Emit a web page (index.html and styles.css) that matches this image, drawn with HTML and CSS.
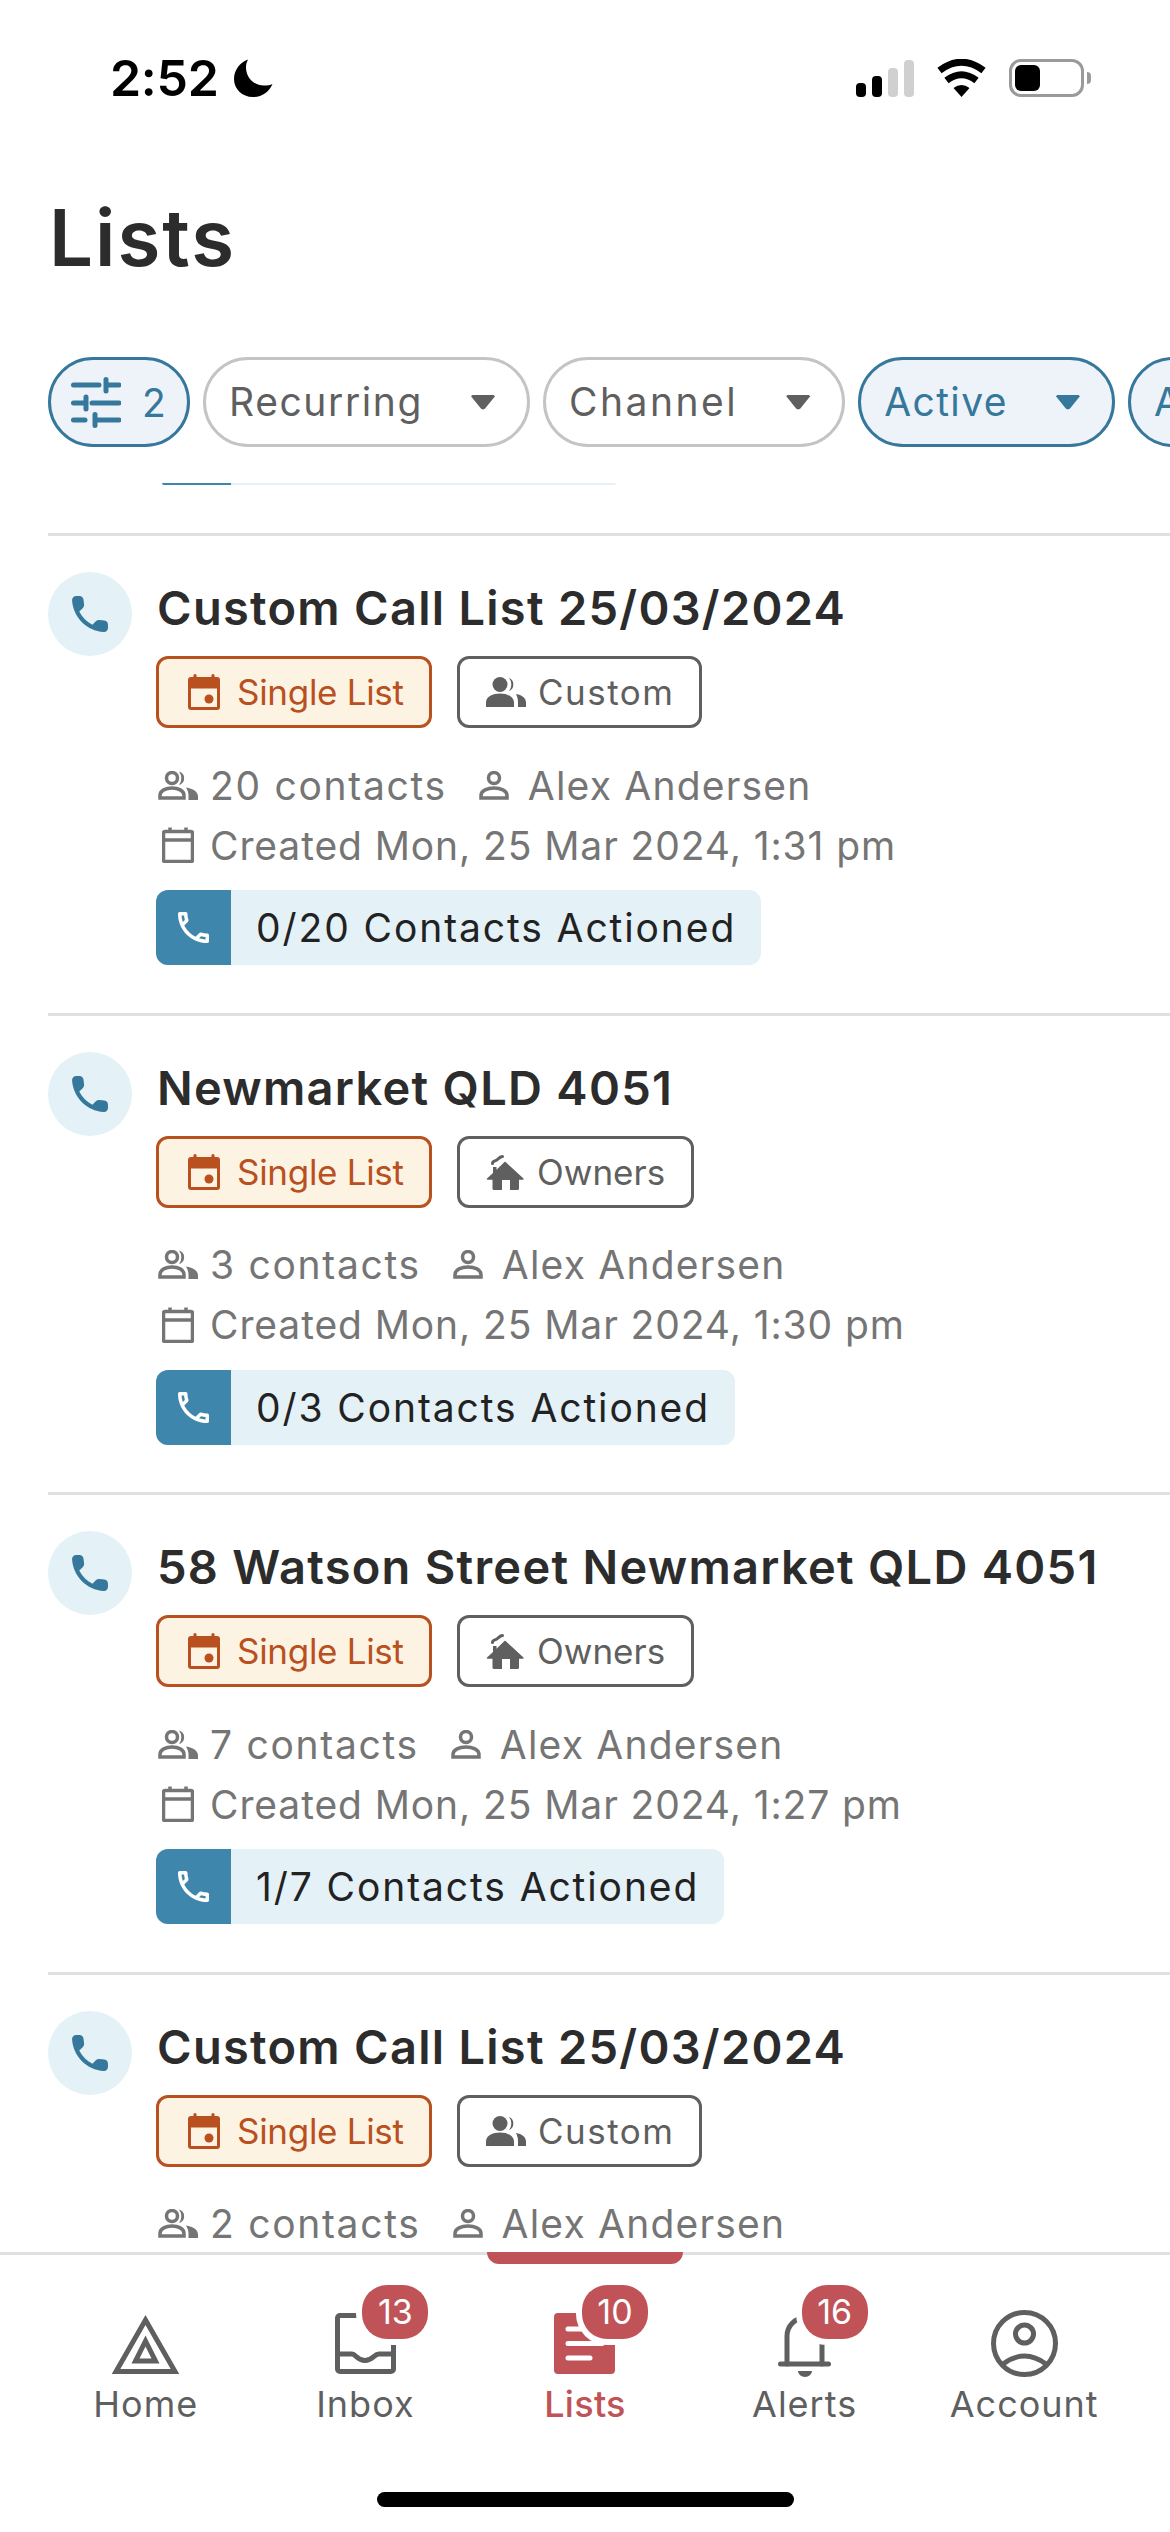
FILE: index.html
```html
<!DOCTYPE html>
<html lang="en">
<head>
<meta charset="utf-8">
<title>Lists</title>
<link rel="stylesheet" href="styles.css">
</head>
<body>
<svg class="defs" aria-hidden="true">
  <symbol id="phone-fill" viewBox="3 3 18 18"><path d="M19.23 15.26l-2.54-.29c-.61-.07-1.21.14-1.64.57l-1.84 1.84c-2.83-1.44-5.15-3.75-6.59-6.59l1.85-1.85c.43-.43.64-1.03.57-1.64l-.29-2.52c-.12-1.01-.97-1.77-1.99-1.77H5.03c-1.13 0-2.07.94-2 2.07.53 8.54 7.36 15.36 15.89 15.89 1.13.07 2.07-.87 2.07-2v-1.73c.01-1.01-.75-1.86-1.76-1.98z"/></symbol>
  <symbol id="phone-line" viewBox="3 3 18 18"><path d="M6.54 5c.06.89.21 1.76.45 2.59l-1.2 1.2c-.41-1.2-.67-2.47-.76-3.79h1.51m9.86 12.02c.85.24 1.72.39 2.6.45v1.49c-1.32-.09-2.59-.35-3.8-.75l1.2-1.19M7.5 3H4c-.55 0-1 .45-1 1 0 9.39 7.61 17 17 17 .55 0 1-.45 1-1v-3.49c0-.55-.45-1-1-1-1.24 0-2.45-.2-3.57-.57-.1-.04-.21-.05-.31-.05-.26 0-.51.1-.71.29l-2.2 2.2c-2.83-1.45-5.15-3.76-6.59-6.59l2.2-2.2c.28-.28.36-.67.25-1.02C8.7 6.45 8.5 5.25 8.5 4c0-.55-.45-1-1-1z"/></symbol>
  <symbol id="event" viewBox="0 0 32 36"><path d="M7 0a1.6 1.6 0 0 1 1.6 1.6V3h14.8V1.6a1.6 1.6 0 0 1 3.2 0V3H29a3 3 0 0 1 3 3v27a3 3 0 0 1-3 3H3a3 3 0 0 1-3-3V6a3 3 0 0 1 3-3h2.400V1.600A1.600 1.600 0 0 1 7 0zM3 14.500V33h26V14.500z"/><circle cx="21" cy="25" r="4.500"/></symbol>
  <symbol id="people-fill" viewBox="0 0 40 30"><circle cx="14" cy="7.500" r="7.500"/><path d="M0 30v-4.500C0 19.500 7 16.500 14 16.500s14 3 14 9V30zM23 .7a7.500 7.500 0 0 1 0 13.600A11 11 0 0 0 23 .7zM30 17c6 1 10 4 10 8.500V30h-8v-4.500c0-3.500-.7-6-2-8.500z"/></symbol>
  <symbol id="house" viewBox="0 0 38 36"><path d="M19 7.500 37.500 24.500a.7.7 0 0 1-.5 1.200h-4V34.500a1.500 1.500 0 0 1-1.500 1.500H24V26h-8v10H8a1.500 1.500 0 0 1-1.500-1.500V25.700H1.500a.7.700 0 0 1-.5-1.200l6-5.500V13h3.500v2.800z"/><path class="smoke" d="M6.500 9.500c0-3 3-2 5-4s3-3 5-3"/></symbol>
  <symbol id="people-line" viewBox="0 0 40 29"><circle cx="14" cy="7" r="5.500" class="ln"/><path class="ln" d="M2 27v-2.500C2 19.500 8 17 14 17s12 2.500 12 7.500V27z"/><path d="M21 .5a7 7 0 0 1 0 13.500A11 11 0 0 0 21 .5zM28 16.500c7 1 12 4 12 9V29h-9.500v-4.500c0-3-1-5.500-2.500-8z"/></symbol>
  <symbol id="person-line" viewBox="0 0 30 29"><circle cx="15" cy="7" r="5.500" class="ln"/><path class="ln" d="M2 27v-2.500C2 19.500 8.500 17 15 17s13 2.500 13 7.500V27z"/></symbol>
  <symbol id="cal-line" viewBox="0 0 32 36"><path class="ln" d="M1.500 13V33a1.500 1.500 0 0 0 1.500 1.500h26a1.500 1.500 0 0 0 1.500-1.500V6A1.500 1.500 0 0 0 29 4.500H3A1.500 1.500 0 0 0 1.500 6V13h29M8 .5v4M24 .5v4"/></symbol>
</svg>

<div class="screen">
  <div class="status">
    <div class="status-left">
      <span class="time">2:52</span>
      <svg class="moon" viewBox="0 0 39 38"><path d="M14 .5C6 3.500 0 11 0 20c0 10 8 18 19 18 9 0 16-5 19.500-13-2 1-5.500 1.500-8.500 1.500-10 0-18-8-18-18 0-3 .7-5.500 2-8z"/></svg>
    </div>
    <div class="status-right">
      <div class="signal">
        <i class="bar b1"></i><i class="bar b2"></i><i class="bar b3 off"></i><i class="bar b4 off"></i>
      </div>
      <svg class="wifi" viewBox="0 0 51 38"><path class="wifi-arc" d="M3.500 11.500Q25.500-5 47.500 11.500"/><path class="wifi-arc" d="M10.500 21.500Q25.500 10 40.500 21.500"/><path d="M25.500 38 17.500 29Q25.500 23 33.500 29z"/></svg>
      <div class="battery"><div class="battery-fill"></div></div>
      <div class="battery-nub"></div>
    </div>
  </div>

  <h1 class="page-title">Lists</h1>

  <div class="filters">
    <div class="pill pill-active pill-icon">
      <svg class="sliders" viewBox="0 0 50 51"><path d="M2.500 8H28M35 2.500V14M35 8H48M2.500 26H12M15 20V32M21 26H48M2.500 43H14M24 37.500V48.500M24 43H48"/></svg>
      <span>2</span>
    </div>
    <div class="pill"><span class="pill-text pt-rec">Recurring</span><i class="caret"></i></div>
    <div class="pill"><span class="pill-text pt-ch">Channel</span><i class="caret"></i></div>
    <div class="pill pill-active"><span class="pill-text pt-act">Active</span><i class="caret"></i></div>
    <div class="pill pill-active"><span class="pill-text">All</span><i class="caret"></i></div>
  </div>

  <div class="list">
    <div class="sliver"><div class="sliver-fill"></div></div>

    <article class="item">
      <div class="avatar"><svg class="ic-phone"><use href="#phone-fill"/></svg></div>
      <div class="body">
        <h2 class="item-title">Custom Call List 25/03/2024</h2>
        <div class="tags">
          <span class="tag tag-single"><svg class="ic-event"><use href="#event"/></svg>Single List</span>
          <span class="tag tag-custom"><svg class="ic-people"><use href="#people-fill"/></svg>Custom</span>
        </div>
        <div class="meta">
          <svg class="ic-m-people"><use href="#people-line"/></svg><span class="m-count">20 contacts</span>
          <svg class="ic-m-person"><use href="#person-line"/></svg><span class="m-owner">Alex Andersen</span>
        </div>
        <div class="meta">
          <svg class="ic-m-cal"><use href="#cal-line"/></svg><span class="m-date">Created Mon, 25 Mar 2024, 1:31 pm</span>
        </div>
        <div class="progress"><div class="progress-ic"><svg class="ic-pl"><use href="#phone-line"/></svg></div><span class="progress-text">0/20 Contacts Actioned</span></div>
      </div>
    </article>

    <article class="item">
      <div class="avatar"><svg class="ic-phone"><use href="#phone-fill"/></svg></div>
      <div class="body">
        <h2 class="item-title">Newmarket QLD 4051</h2>
        <div class="tags">
          <span class="tag tag-single"><svg class="ic-event"><use href="#event"/></svg>Single List</span>
          <span class="tag tag-kind"><svg class="ic-house"><use href="#house"/></svg>Owners</span>
        </div>
        <div class="meta">
          <svg class="ic-m-people"><use href="#people-line"/></svg><span class="m-count">3 contacts</span>
          <svg class="ic-m-person"><use href="#person-line"/></svg><span class="m-owner">Alex Andersen</span>
        </div>
        <div class="meta">
          <svg class="ic-m-cal"><use href="#cal-line"/></svg><span class="m-date">Created Mon, 25 Mar 2024, 1:30 pm</span>
        </div>
        <div class="progress"><div class="progress-ic"><svg class="ic-pl"><use href="#phone-line"/></svg></div><span class="progress-text">0/3 Contacts Actioned</span></div>
      </div>
    </article>

    <article class="item">
      <div class="avatar"><svg class="ic-phone"><use href="#phone-fill"/></svg></div>
      <div class="body">
        <h2 class="item-title">58 Watson Street Newmarket QLD 4051</h2>
        <div class="tags">
          <span class="tag tag-single"><svg class="ic-event"><use href="#event"/></svg>Single List</span>
          <span class="tag tag-kind"><svg class="ic-house"><use href="#house"/></svg>Owners</span>
        </div>
        <div class="meta">
          <svg class="ic-m-people"><use href="#people-line"/></svg><span class="m-count">7 contacts</span>
          <svg class="ic-m-person"><use href="#person-line"/></svg><span class="m-owner">Alex Andersen</span>
        </div>
        <div class="meta">
          <svg class="ic-m-cal"><use href="#cal-line"/></svg><span class="m-date">Created Mon, 25 Mar 2024, 1:27 pm</span>
        </div>
        <div class="progress"><div class="progress-ic"><svg class="ic-pl"><use href="#phone-line"/></svg></div><span class="progress-text">1/7 Contacts Actioned</span></div>
      </div>
    </article>

    <article class="item">
      <div class="avatar"><svg class="ic-phone"><use href="#phone-fill"/></svg></div>
      <div class="body">
        <h2 class="item-title">Custom Call List 25/03/2024</h2>
        <div class="tags">
          <span class="tag tag-single"><svg class="ic-event"><use href="#event"/></svg>Single List</span>
          <span class="tag tag-custom"><svg class="ic-people"><use href="#people-fill"/></svg>Custom</span>
        </div>
        <div class="meta">
          <svg class="ic-m-people"><use href="#people-line"/></svg><span class="m-count">2 contacts</span>
          <svg class="ic-m-person"><use href="#person-line"/></svg><span class="m-owner">Alex Andersen</span>
        </div>
      </div>
    </article>
  </div>

  <nav class="nav">
    <i class="nav-marker"></i>
    <div class="tabs">
      <div class="tab">
        <div class="tab-icon"><svg class="ni-home" viewBox="0 0 67 60"><path d="M33.500 6 4 57.500H63z"/><path d="M33.500 27 23.500 47H43.500z"/></svg></div>
        <span class="tab-label">Home</span>
      </div>
      <div class="tab">
        <div class="tab-icon"><svg class="ni-inbox" viewBox="0 0 61 61"><path d="M5 2.500H56a2.500 2.500 0 0 1 2.500 2.500V56a2.500 2.500 0 0 1-2.500 2.500H5A2.500 2.500 0 0 1 2.500 56V5A2.500 2.500 0 0 1 5 2.500z"/><path d="M2.500 41H17c4 0 5 6.500 13 6.500S39 41 44 41H58.500"/></svg><b class="count">13</b></div>
        <span class="tab-label">Inbox</span>
      </div>
      <div class="tab tab-on">
        <div class="tab-icon"><svg class="ni-lists" viewBox="0 0 61 61"><rect width="61" height="61" rx="4"/><path d="M14 16H48M14 30.500H48M14 45H36"/></svg><b class="count">10</b></div>
        <span class="tab-label">Lists</span>
      </div>
      <div class="tab">
        <div class="tab-icon"><svg class="ni-bell" viewBox="0 0 53 67"><path d="M9 54V26C9 16 17 8 26.500 8S44 16 44 26V54"/><path d="M2.500 54H50.500"/><path class="fill" d="M20 61H34a7 6 0 0 1-14 0z"/></svg><b class="count">16</b></div>
        <span class="tab-label">Alerts</span>
      </div>
      <div class="tab">
        <div class="tab-icon"><svg class="ni-account" viewBox="0 0 67 67"><circle cx="33.500" cy="33.500" r="31"/><circle cx="33.500" cy="24" r="9"/><path d="M12 54C20 48 27 46 33.500 46S47 48 55 54"/></svg></div>
        <span class="tab-label">Account</span>
      </div>
    </div>
    <div class="home-bar"></div>
  </nav>
</div>
</body>
</html>
```
FILE: styles.css
```css
* { box-sizing: border-box; }
html, body { margin: 0; padding: 0; background: #fff; }
body { font-family: Inter, "Noto Sans", sans-serif; }
.defs { display: none; }
.screen { width: 1170px; height: 2532px; display: flex; flex-direction: column; overflow: hidden; background: #fff; }

/* status bar */
.status { height: 60px; margin-top: 48px; padding: 0 79px 0 110px; display: flex; justify-content: space-between; align-items: center; flex: none; }
.status-left { display: flex; align-items: center; gap: 15px; }
.time { font-size: 50px; line-height: 60px; font-weight: 600; color: #000; letter-spacing: -0.3px; }
.moon { width: 39px; height: 38px; fill: #000; }
.status-right { display: flex; align-items: center; }
.signal { display: flex; align-items: flex-end; gap: 6px; height: 38px; margin-right: 22px; }
.bar { display: block; width: 10px; border-radius: 4px; background: #000; }
.b1 { height: 14px; }
.b2 { height: 21px; }
.b3 { height: 29px; }
.b4 { height: 37px; }
.bar.off { background: #d0d0d0; }
.wifi { width: 51px; height: 38px; fill: #000; margin-right: 22px; }
.wifi-arc { fill: none; stroke: #000; stroke-width: 7; }
.battery { width: 75px; height: 38px; border: 3px solid #9a9a9a; border-radius: 12px; padding: 3px; }
.battery-fill { width: 25px; height: 26px; background: #000; border-radius: 6px; }
.battery-nub { width: 4px; height: 12px; margin-left: 3px; background: #9a9a9a; border-radius: 0 6px 6px 0; }

/* title */
.page-title { margin: 80px 0 0 49px; font-size: 78px; line-height: 100px; font-weight: 600; color: #2c2c2c; letter-spacing: 2px; flex: none; }

/* filters */
.filters { display: flex; gap: 13px; margin: 69px 0 0 48px; flex: none; width: 1200px; }
.pill { height: 90px; flex: none; display: flex; align-items: center; border: 3px solid #c4c4c4; border-radius: 45px; padding: 0 32px 0 23px; color: #5f5f5f; font-size: 39px; }
.pill-text { margin-right: 48px; padding-bottom: 2px; letter-spacing: 0.6px; white-space: nowrap; }
.pt-rec { letter-spacing: 1.600px; }
.pt-ch { letter-spacing: 2.500px; }
.pt-act { letter-spacing: 1.400px; }
.caret { display: block; width: 24px; height: 15px; background: #5f5f5f; clip-path: polygon(8% 0, 92% 0, 100% 12%, 58% 95%, 50% 100%, 42% 95%, 0 12%); }
.pill-active { background: #eef3fa; border-color: #35789b; color: #35789b; }
.pill-active .caret { background: #35789b; }
.pill-icon { width: 142px; padding: 0 0 0 20px; gap: 21px; }
.sliders { width: 50px; height: 51px; fill: none; stroke: #35789b; stroke-width: 5; stroke-linecap: round; }

/* list */
.list { flex: 1; min-height: 0; overflow: hidden; margin-top: 36px; }
.sliver { width: 454px; height: 2px; margin: 0 0 48px 162px; background: #e4f1f7; border-radius: 0 0 6px 6px; overflow: hidden; }
.sliver-fill { width: 69px; height: 2px; background: #3e86ab; }
.item { margin-left: 48px; border-top: 3px solid #e0e0e0; padding: 36px 0 48px; display: flex; gap: 25px; height: 479.500px; }
.avatar { width: 84px; height: 84px; flex: none; border-radius: 50%; background: #e4f1f7; display: flex; align-items: center; justify-content: center; }
.ic-phone { width: 36px; height: 36px; fill: #35789b; }
.body { min-width: 0; flex: 1; }
.item-title { margin: 0 0 12px; font-size: 47px; line-height: 72px; font-weight: 600; color: #2c2c2c; white-space: nowrap; letter-spacing: 1.270px; }
.tags { display: flex; gap: 25px; height: 72px; margin-bottom: 27px; margin-left: -1px; }
.tag { display: flex; align-items: center; border: 3px solid #5f5f5f; border-radius: 12px; font-size: 35px; color: #5f5f5f; background: #fff; white-space: nowrap; padding: 0 26px; }
.tag-single { width: 276px; padding-left: 29px; gap: 17px; color: #b8501f; border-color: #b8501f; background: #fdf3e3; letter-spacing: -0.300px; }
.tag-kind { gap: 13px; }
.tag-custom { gap: 12px; letter-spacing: 1.500px; padding-right: 24px; }
.ic-event { width: 32px; height: 36px; fill: #b8501f; flex: none; }
.ic-people { width: 40px; height: 30px; fill: #5f5f5f; flex: none; }
.ic-house { width: 38px; height: 36px; fill: #5f5f5f; flex: none; }
.smoke { fill: none; stroke: #5f5f5f; stroke-width: 3; stroke-linecap: round; }
.meta { display: flex; align-items: center; height: 60px; font-size: 39px; color: #757575; white-space: nowrap; }
.m-count { letter-spacing: 1.700px; }
.m-owner { letter-spacing: 1.200px; }
.m-date { letter-spacing: 0.900px; }
.ln { fill: none; stroke: #757575; stroke-width: 3.500; }
.ic-m-people { width: 40px; height: 29px; fill: #757575; margin: 0 12px 0 1px; flex: none; }
.ic-m-person { width: 30px; height: 29px; margin: 0 19px 0 32px; flex: none; }
.ic-m-cal { width: 32px; height: 36px; margin: 0 16px 0 5px; flex: none; }
.progress { display: inline-flex; align-items: center; height: 75px; margin-top: 15px; margin-left: -1px; background: #e4f1f7; border-radius: 12px; overflow: hidden; }
.progress-ic { width: 75px; height: 75px; background: #3e86ab; display: flex; align-items: center; justify-content: center; }
.ic-pl { width: 31px; height: 31px; fill: #fff; }
.progress-text { padding: 0 25px; font-size: 39px; color: #222; letter-spacing: 1.900px; white-space: nowrap; }

/* nav */
.nav { position: relative; flex: none; height: 280px; border-top: 3px solid #e0e0e0; background: #fff; display: flex; flex-direction: column; align-items: center; }
.nav-marker { position: absolute; top: -3px; left: 487px; width: 196px; height: 12px; background: #c05357; border-radius: 0 0 12px 12px; }
.tabs { width: 1098px; margin-top: 55px; display: grid; grid-template-columns: repeat(5, 1fr); }
.tab { display: flex; flex-direction: column; align-items: center; color: #5f5f5f; }
.tab-icon { position: relative; width: 67px; height: 67px; display: flex; align-items: center; justify-content: center; }
.tab-label { margin-top: 5px; font-size: 36px; line-height: 44px; letter-spacing: 1px; }
.tab-on { color: #c05357; }
.tab-on .tab-label { font-weight: 500; letter-spacing: 0.300px; }
.count { position: absolute; top: -25px; left: calc(50% - 3px); min-width: 66px; height: 54px; padding: 0 6px; border-radius: 25px; background: #c05357; box-shadow: 0 0 0 6px #fff; color: #fff; font-size: 34px; line-height: 54px; font-weight: 400; text-align: center; }
.ni-home { width: 67px; height: 60px; fill: none; stroke: #5f5f5f; stroke-width: 5; }
.ni-inbox { width: 61px; height: 61px; fill: none; stroke: #5f5f5f; stroke-width: 5; }
.ni-lists { width: 61px; height: 61px; fill: #c05357; }
.ni-lists path { fill: none; stroke: #fff; stroke-width: 5; stroke-linecap: round; }
.ni-bell { width: 53px; height: 67px; fill: none; stroke: #5f5f5f; stroke-width: 5; stroke-linecap: round; }
.ni-bell .fill { fill: #5f5f5f; stroke: none; }
.ni-account { width: 67px; height: 67px; fill: none; stroke: #5f5f5f; stroke-width: 5; }
.home-bar { width: 417px; height: 15px; margin-top: 66px; border-radius: 8px; background: #000; }
```
